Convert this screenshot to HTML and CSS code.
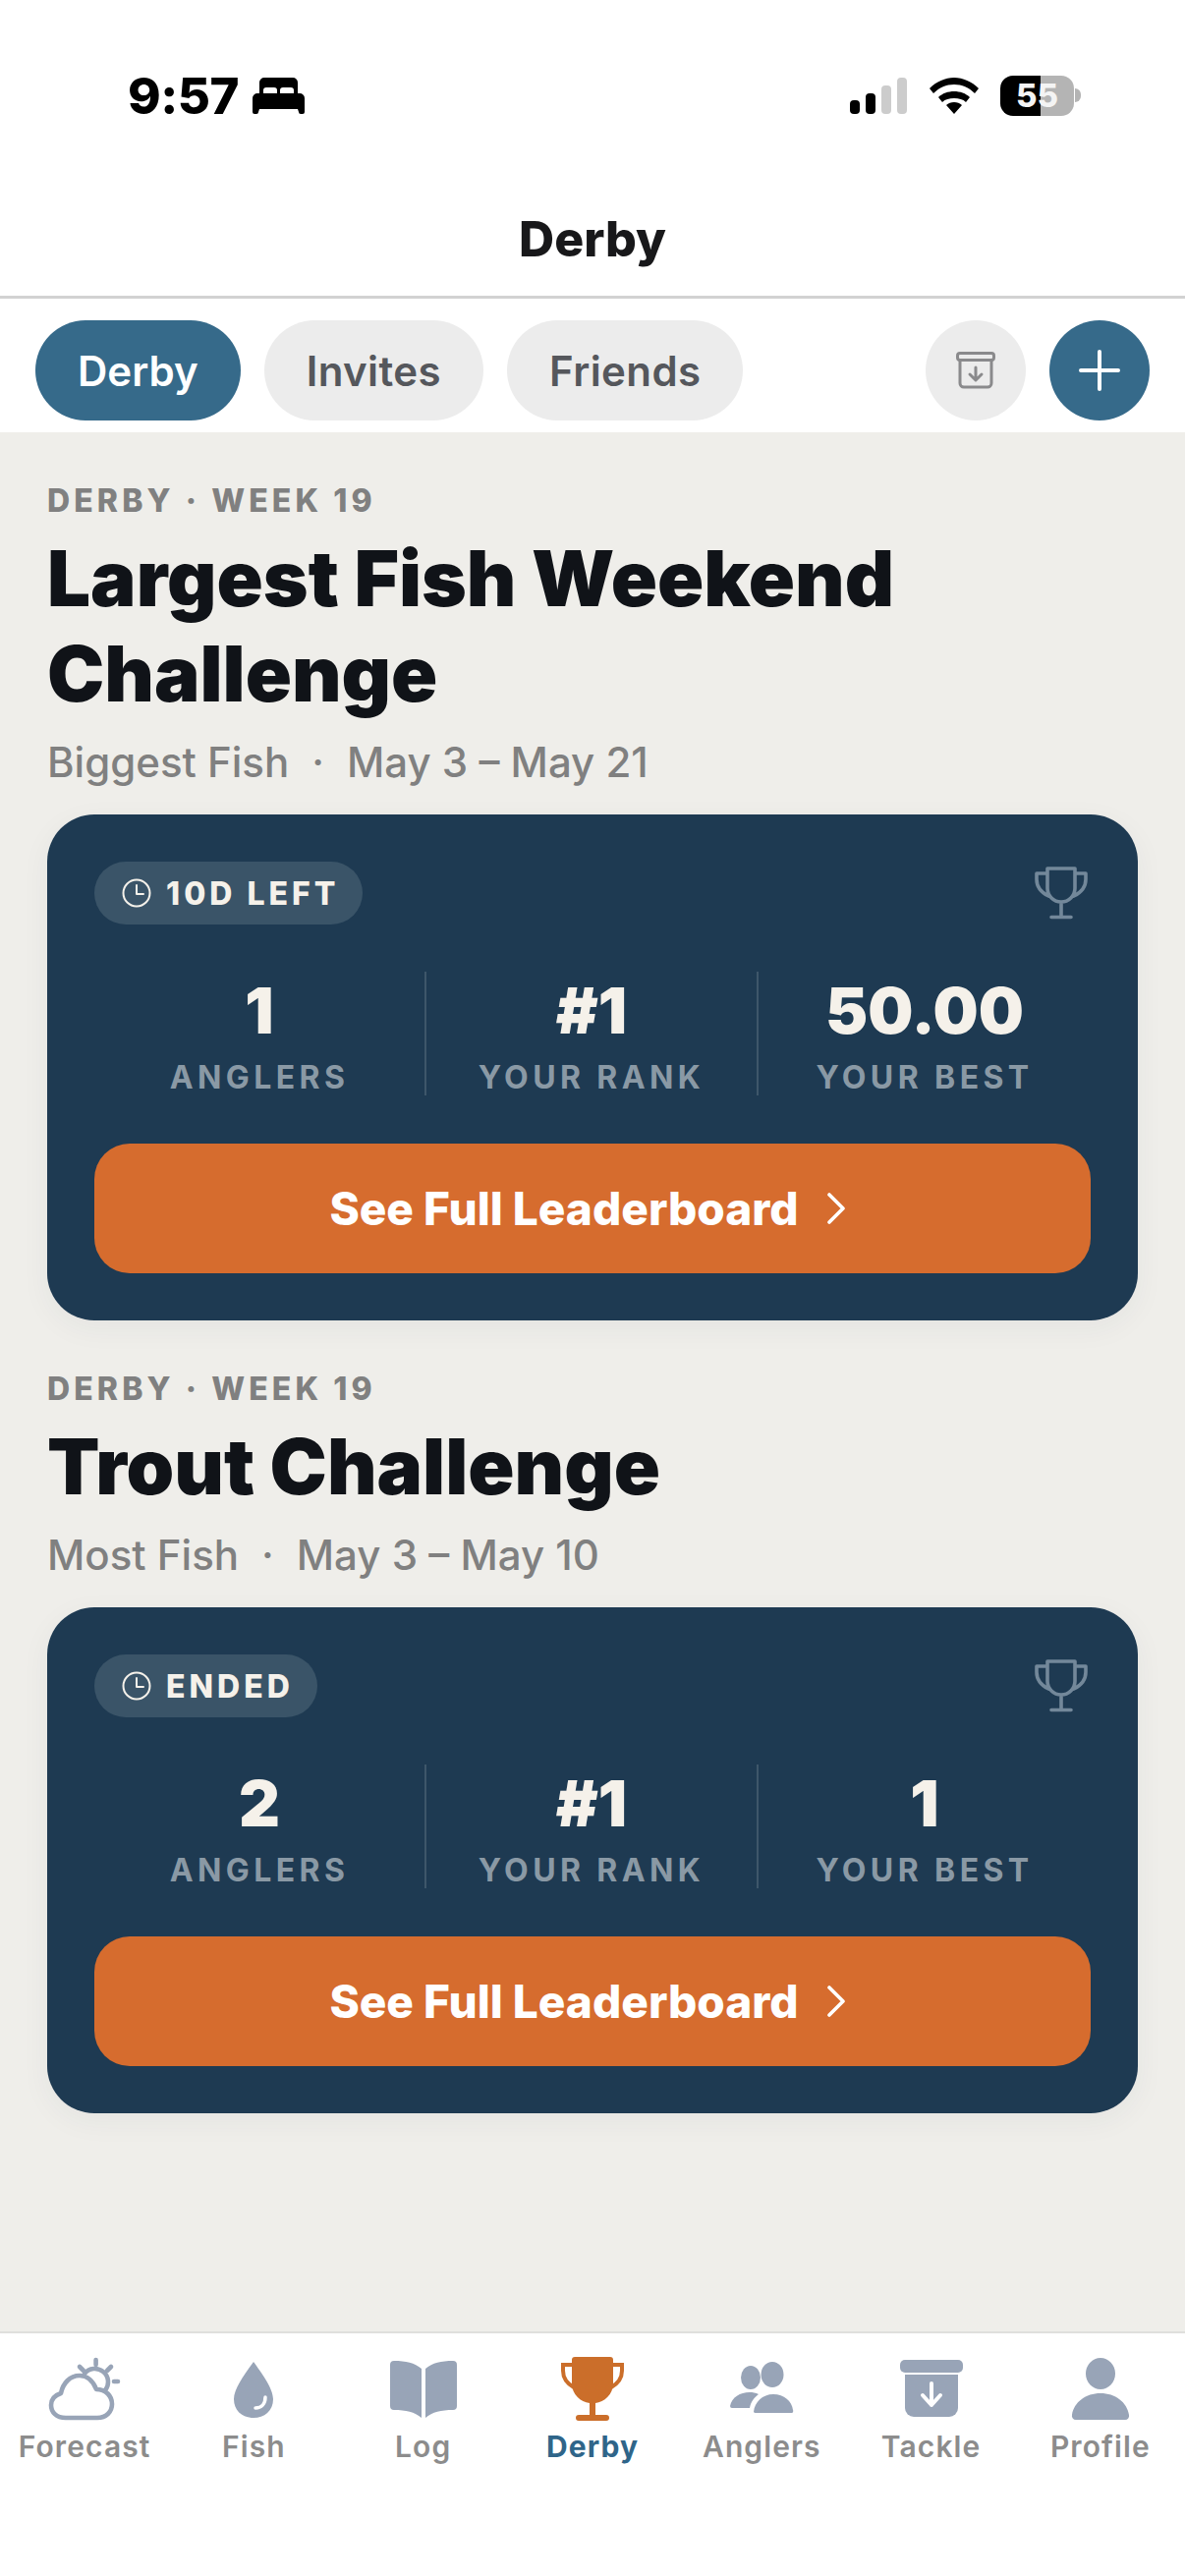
FILE: index.html
```html
<!DOCTYPE html>
<html lang="en">
<head>
<meta charset="utf-8">
<title>Derby</title>
<link rel="stylesheet" href="styles.css">
</head>
<body>
<div class="app">
  <header class="status">
    <div class="status-left">
      <span class="time">9:57</span>
      <svg class="bed" viewBox="0 0 53 37"><path d="M7 16V5a5 5 0 0 1 5-5h29a5 5 0 0 1 5 5v11h-4v-3a3 3 0 0 0-3-3h-8a3 3 0 0 0-3 3v3h-3v-3a3 3 0 0 0-3-3h-8a3 3 0 0 0-3 3v3zM5 16h43a5 5 0 0 1 5 5v14a2 2 0 0 1-2 2h-2a2 2 0 0 1-2-2l-1-3H7l-1 3a2 2 0 0 1-2 2H2a2 2 0 0 1-2-2V21a5 5 0 0 1 5-5z" fill="#000"/></svg>
    </div>
    <div class="status-right">
      <svg class="signal" viewBox="0 0 58 37"><rect x="0" y="23" width="10" height="14" rx="4" fill="#000"/><rect x="16" y="16" width="10" height="21" rx="4" fill="#000"/><rect x="32" y="8" width="10" height="29" rx="4" fill="#ccc"/><rect x="48" y="0" width="10" height="37" rx="4" fill="#ccc"/></svg>
      <svg class="wifi" viewBox="0 0 50 37"><path d="M0 11C7 4 16 0 25 0s18 4 25 11l-4 5C40 10 33 7 25 7S10 10 4 16zM9 20c4-4 10-6 16-6s12 2 16 6l-4 5c-3-3-7-4-12-4s-9 1-12 4zM17 28c2-2 5-3 8-3s6 1 8 3l-8 9z" fill="#000"/></svg>
      <div class="battery"><span class="battery-num">55</span></div>
      <span class="battery-tip"></span>
    </div>
  </header>

  <div class="titlebar"><h1 class="page-title">Derby</h1></div>

  <nav class="tabs">
    <a class="tab tab-active">Derby</a>
    <a class="tab">Invites</a>
    <a class="tab">Friends</a>
    <span class="tabs-spacer"></span>
    <button class="round round-grey">
      <svg class="icon-archive" viewBox="0 0 40 38" fill="none" stroke="#8a8a8c" stroke-width="3" stroke-linecap="round" stroke-linejoin="round"><rect x="1.5" y="1.5" width="37" height="7" rx="2.5"/><path d="M4 9v23a4 4 0 0 0 4 4h24a4 4 0 0 0 4-4V9"/><path d="M20 16v12M14 23l6 6 6-6"/></svg>
    </button>
    <button class="round round-blue">
      <svg class="icon-plus" viewBox="0 0 42 42" fill="none" stroke="#fff" stroke-width="4" stroke-linecap="round"><path d="M21 2v38M2 21h38"/></svg>
    </button>
  </nav>

  <main class="content">
    <section class="derby">
      <p class="eyebrow">DERBY · WEEK 19</p>
      <h2 class="derby-title">Largest Fish Weekend Challenge</h2>
      <p class="derby-sub"><span>Biggest Fish</span><span class="dot">·</span><span>May 3 – May 21</span></p>
      <div class="card">
        <div class="card-top">
          <span class="pill">
            <svg class="clock" viewBox="0 0 30 30" fill="none" stroke="#f5f1ea" stroke-width="2" stroke-linecap="round" stroke-linejoin="round"><circle cx="15" cy="15" r="13.5"/><path d="M15 7v9h7"/></svg>
            10D LEFT
          </span>
          <svg class="cup" viewBox="0 0 54 54" fill="none" stroke="#73889a" stroke-width="3.6" stroke-linecap="round" stroke-linejoin="round"><path d="M13 2h28v20a14 14 0 0 1-28 0zM13 7H2v6c0 7 4 13 12 17M41 7h11v6c0 7-4 13-12 17M27 36v15M17 51.500h20"/></svg>
        </div>
        <div class="stats">
          <div class="stat"><span class="stat-value">1</span><span class="stat-label">ANGLERS</span></div>
          <div class="stat"><span class="stat-value">#1</span><span class="stat-label">YOUR RANK</span></div>
          <div class="stat"><span class="stat-value">50.00</span><span class="stat-label">YOUR BEST</span></div>
        </div>
        <button class="cta">See Full Leaderboard
          <svg class="chev" viewBox="0 0 20 32" fill="none" stroke="#fff" stroke-width="3.6" stroke-linecap="round" stroke-linejoin="round"><path d="M3 2l14 14L3 30"/></svg>
        </button>
      </div>
    </section>

    <section class="derby">
      <p class="eyebrow">DERBY · WEEK 19</p>
      <h2 class="derby-title">Trout Challenge</h2>
      <p class="derby-sub"><span>Most Fish</span><span class="dot">·</span><span>May 3 – May 10</span></p>
      <div class="card">
        <div class="card-top">
          <span class="pill">
            <svg class="clock" viewBox="0 0 30 30" fill="none" stroke="#f5f1ea" stroke-width="2" stroke-linecap="round" stroke-linejoin="round"><circle cx="15" cy="15" r="13.5"/><path d="M15 7v9h7"/></svg>
            ENDED
          </span>
          <svg class="cup" viewBox="0 0 54 54" fill="none" stroke="#73889a" stroke-width="3.6" stroke-linecap="round" stroke-linejoin="round"><path d="M13 2h28v20a14 14 0 0 1-28 0zM13 7H2v6c0 7 4 13 12 17M41 7h11v6c0 7-4 13-12 17M27 36v15M17 51.500h20"/></svg>
        </div>
        <div class="stats">
          <div class="stat"><span class="stat-value">2</span><span class="stat-label">ANGLERS</span></div>
          <div class="stat"><span class="stat-value">#1</span><span class="stat-label">YOUR RANK</span></div>
          <div class="stat"><span class="stat-value">1</span><span class="stat-label">YOUR BEST</span></div>
        </div>
        <button class="cta">See Full Leaderboard
          <svg class="chev" viewBox="0 0 20 32" fill="none" stroke="#fff" stroke-width="3.6" stroke-linecap="round" stroke-linejoin="round"><path d="M3 2l14 14L3 30"/></svg>
        </button>
      </div>
    </section>
  </main>

  <footer class="tabbar">
    <a class="tb">
      <svg class="tb-icon" viewBox="0 0 76 66" fill="none" stroke="#98a4b7" stroke-width="4.6" stroke-linecap="round" stroke-linejoin="round"><path d="M19 62C9 62 4 56 4 49c0-6 4-10 10-12 2-10 9-18 19-18 8 0 14 6 17 14 10 0 16 7 16 15 0 8-6 14-15 14z"/><path d="M38 17a13.500 13.500 0 1 1 21 17"/><path d="M49.600 3v5M33 10l4 4M65 10l-4 4M68 25h4"/></svg>
      <span>Forecast</span>
    </a>
    <a class="tb">
      <svg class="tb-icon" viewBox="0 0 76 66"><path d="M38 5C30 16 18 32 18 43c0 12 9 19 20 19s20-7 20-19C58 32 46 16 38 5z" fill="#98a4b7"/><path d="M50 41c0 7-4 11-10 11" fill="none" stroke="#fff" stroke-width="3.500" stroke-linecap="round"/></svg>
      <span>Fish</span>
    </a>
    <a class="tb">
      <svg class="tb-icon" viewBox="0 0 76 66"><path d="M4 8a4 4 0 0 1 4-4c12 0 21 2 28 8v50c-7-6-16-8-28-8a4 4 0 0 1-4-4z" fill="#98a4b7"/><path d="M72 8a4 4 0 0 0-4-4c-12 0-21 2-28 8v50c7-6 16-8 28-8a4 4 0 0 0 4-4z" fill="#98a4b7"/></svg>
      <span>Log</span>
    </a>
    <a class="tb tb-active">
      <svg class="tb-icon" viewBox="0 0 76 66"><path d="M20 0h36a3 3 0 0 1 3 3v24c0 11-9 19-18 20v12h11a3 3 0 0 1 0 6H24a3 3 0 0 1 0-6h11V47c-9-1-18-9-18-20V3a3 3 0 0 1 3-3z" fill="#cb6e2a"/><path d="M18 8H8v6c0 7 4 13 11 17M58 8h10v6c0 7-4 13-11 17" fill="none" stroke="#cb6e2a" stroke-width="4"/></svg>
      <span>Derby</span>
    </a>
    <a class="tb">
      <svg class="tb-icon" viewBox="0 0 76 66" fill="#98a4b7"><ellipse cx="27" cy="21" rx="10" ry="12"/><ellipse cx="49" cy="18" rx="11.500" ry="13"/><path d="M6 50c2-9 10-14 20-14 3 0 6 .5 9 2-5 4-8 8-9 14H8a2 2 0 0 1-2-2z"/><path d="M30 56c1-10 9-18 20-18s19 7 20 16a2 2 0 0 1-2 3H32a2 2 0 0 1-2-1z"/></svg>
      <span>Anglers</span>
    </a>
    <a class="tb">
      <svg class="tb-icon" viewBox="0 0 76 66"><rect x="6" y="3" width="64" height="13" rx="5" fill="#98a4b7"/><path d="M11 18h54v34a9 9 0 0 1-9 9H20a9 9 0 0 1-9-9z" fill="#98a4b7"/><path d="M38 27v22M29 39l9 10 9-10" fill="none" stroke="#fff" stroke-width="4" stroke-linecap="round" stroke-linejoin="round"/></svg>
      <span>Tackle</span>
    </a>
    <a class="tb">
      <svg class="tb-icon" viewBox="0 0 76 66" fill="#98a4b7"><ellipse cx="38" cy="17" rx="15" ry="16"/><path d="M9 59c2-13 14-22 29-22s27 9 29 22a4 4 0 0 1-4 5H13a4 4 0 0 1-4-5z"/></svg>
      <span>Profile</span>
    </a>
  </footer>
</div>
</body>
</html>
```
FILE: styles.css
```css
* { box-sizing: border-box; margin: 0; padding: 0; }
html, body { background: #fff; }
body { font-family: Inter, "Liberation Sans", sans-serif; }
.app { width: 1206px; height: 2622px; display: flex; flex-direction: column; overflow: hidden; }

.status { height: 194px; flex: none; display: flex; align-items: center; justify-content: space-between; padding: 0 106px 0 130px; }
.status-left { display: flex; align-items: center; gap: 14px; }
.time { font-size: 51px; font-weight: 800; color: #000; line-height: 1; letter-spacing: -0.5px; }
.bed { width: 53px; height: 37px; display: block; }
.status-right { display: flex; align-items: center; }
.signal { width: 58px; height: 37px; display: block; margin-right: 23px; }
.wifi { width: 50px; height: 37px; display: block; margin-right: 22px; }
.battery { width: 75px; height: 41px; border-radius: 13px; background: linear-gradient(90deg, #000 0, #000 55%, #b4b4b4 55%, #b4b4b4 100%); display: flex; align-items: center; justify-content: center; }
.battery-num { font-size: 33px; font-weight: 800; color: #f4f4f4; line-height: 1; }
.battery-tip { width: 6px; height: 14px; margin-left: 1px; background: #b4b4b4; border-radius: 0 7px 7px 0; }

.titlebar { height: 110px; flex: none; display: flex; align-items: center; justify-content: center; padding-bottom: 10px; border-bottom: 3px solid #d2d2d2; }
.page-title { font-size: 50px; font-weight: 800; color: #18181a; line-height: 1; }

.tabs { height: 136px; flex: none; display: flex; align-items: flex-start; gap: 24px; padding: 22px 36px 0; background: #fff; }
.tab { height: 102px; display: flex; align-items: center; padding: 0 43px; border-radius: 51px; background: #ececec; color: #55575c; font-size: 42px; font-weight: 600; letter-spacing: 0.4px; }
.tab-active { background: #366a8a; color: #fff; letter-spacing: 0; }
.tabs-spacer { flex: 1; }
.round { width: 102px; height: 102px; border-radius: 50%; border: 0; display: flex; align-items: center; justify-content: center; }
.round-grey { background: #ececec; }
.round-blue { background: #366a8a; }
.icon-archive { width: 40px; height: 38px; }
.icon-plus { width: 42px; height: 42px; }

.content { flex: 1; background: #efeeea; padding: 52px 48px 0; display: flex; flex-direction: column; gap: 52px; }
.eyebrow { font-size: 32px; line-height: 36px; font-weight: 800; letter-spacing: 4.1px; color: #808080; }
.derby-title { margin-top: 12px; font-size: 78px; line-height: 97px; font-weight: 900; color: #101318; }
.derby-sub { margin-top: 17px; font-size: 42px; line-height: 50px; font-weight: 500; color: #808080; display: flex; }
.dot { margin: 0 23px; }

.card { margin-top: 28px; height: 515px; border-radius: 48px; background: #1e3a52; padding: 48px; box-shadow: 0 8px 30px rgba(30, 58, 82, 0.05); display: flex; flex-direction: column; }
.card-top { display: flex; justify-content: space-between; align-items: center; height: 64px; }
.pill { height: 64px; border-radius: 32px; background: #3a5468; padding: 0 24px 0 28px; display: flex; align-items: center; gap: 15px; color: #f5f1ea; font-size: 32px; font-weight: 800; letter-spacing: 4px; }
.clock { width: 30px; height: 30px; flex: none; }
.cup { width: 54px; height: 54px; margin-right: 3px; }

.stats { margin-top: 48px; height: 126px; display: grid; grid-template-columns: repeat(3, 1fr); }
.stat { display: flex; flex-direction: column; align-items: center; justify-content: space-between; padding: 4px 0 0; border-right: 2px solid #3e566a; }
.stat:last-child { border-right: 0; }
.stat-value { font-size: 65px; line-height: 72px; font-weight: 900; color: #f5f1ea; }
.stat-label { font-size: 32px; line-height: 36px; font-weight: 700; letter-spacing: 4.4px; color: #8a99a5; }

.cta { margin-top: 49px; height: 132px; border: 0; border-radius: 36px; background: #d66c2e; color: #fff; font-family: inherit; font-size: 46px; font-weight: 800; display: flex; align-items: center; justify-content: center; gap: 28px; padding-right: 10px; }
.chev { width: 20px; height: 32px; }

.tabbar { height: 249px; flex: none; border-top: 2px solid #dfdfdc; background: #fff; display: grid; grid-template-columns: repeat(7, 1fr); padding-top: 24px; align-items: start; }
.tb { display: flex; flex-direction: column; align-items: center; color: #8c8c8c; font-size: 30px; font-weight: 600; line-height: 36px; letter-spacing: 1.1px; }
.tb-icon { width: 76px; height: 66px; display: block; margin-bottom: 7px; }
.tb-active { color: #2f6589; font-weight: 700; }
```
